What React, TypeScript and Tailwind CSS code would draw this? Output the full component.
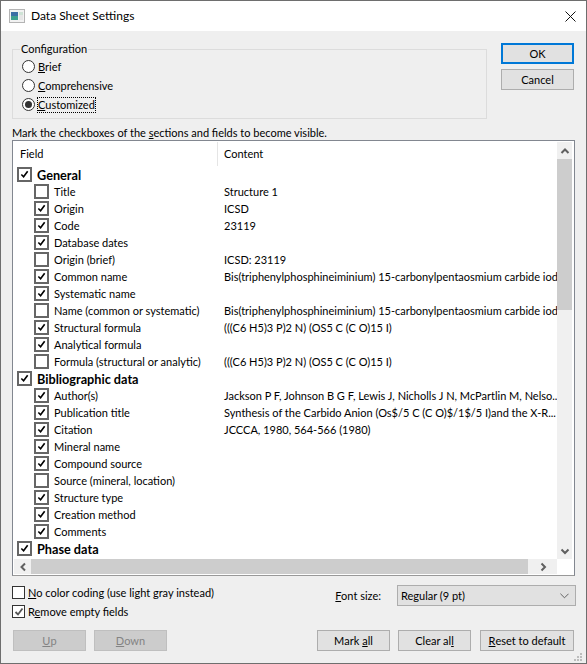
import React from 'react'

interface Row {
  label: string
  content?: string
  checked?: boolean
  section?: boolean
}

const BIS = 'Bis(triphenylphosphineiminium) 15-carbonylpentaosmium carbide iodide'

const ROWS: Row[] = [
  { label: 'General', checked: true, section: true },
  { label: 'Title', content: 'Structure 1' },
  { label: 'Origin', content: 'ICSD', checked: true },
  { label: 'Code', content: '23119', checked: true },
  { label: 'Database dates', checked: true },
  { label: 'Origin (brief)', content: 'ICSD: 23119' },
  { label: 'Common name', content: BIS, checked: true },
  { label: 'Systematic name', checked: true },
  { label: 'Name (common or systematic)', content: BIS },
  { label: 'Structural formula', content: '(((C6 H5)3 P)2 N) (OS5 C (C O)15 I)', checked: true },
  { label: 'Analytical formula', checked: true },
  { label: 'Formula (structural or analytic)', content: '(((C6 H5)3 P)2 N) (OS5 C (C O)15 I)' },
  { label: 'Bibliographic data', checked: true, section: true },
  { label: 'Author(s)', content: 'Jackson P F, Johnson B G F, Lewis J, Nicholls J N, McPartlin M, Nelso...', checked: true },
  { label: 'Publication title', content: 'Synthesis of the Carbido Anion (Os$/5 C (C O)$/1$/5 I)and the X-R...', checked: true },
  { label: 'Citation', content: 'JCCCA, 1980, 564-566 (1980)', checked: true },
  { label: 'Mineral name', checked: true },
  { label: 'Compound source', checked: true },
  { label: 'Source (mineral, location)' },
  { label: 'Structure type', checked: true },
  { label: 'Creation method', checked: true },
  { label: 'Comments', checked: true },
  { label: 'Phase data', checked: true, section: true },
]

const Tick = ({ className }: { className: string }) => (
  <svg viewBox="0 0 10 10" className={className}>
    <path d="M1.5 5 L4 7.5 L8.5 1.5" fill="none" stroke="currentColor" strokeWidth="1.8" />
  </svg>
)

const TreeCheck = ({ checked }: { checked?: boolean }) => (
  <div className="w-[15px] h-[15px] border-2 border-[#666666] bg-white flex items-center justify-center shrink-0">
    {checked && <Tick className="w-[9px] h-[9px] text-black" />}
  </div>
)

const Radio = ({ label, u, selected }: { label: string; u: string; selected?: boolean }) => (
  <div className="flex items-center h-[19px]">
    <div className="w-[13px] h-[13px] rounded-full border border-[#333333] bg-white flex items-center justify-center shrink-0">
      {selected && <div className="w-[7px] h-[7px] rounded-full bg-[#333333]" />}
    </div>
    <span className={selected ? 'ml-[3px] outline-1 outline-dotted outline-black leading-[14px]' : 'ml-[3px]'}>
      <span className="underline">{u}</span>
      {label}
    </span>
  </div>
)

const Button = ({
  children,
  className = '',
  disabled,
  primary,
}: {
  children: React.ReactNode
  className?: string
  disabled?: boolean
  primary?: boolean
}) => (
  <button
    className={`h-[21px] flex items-center justify-center ${
      primary
        ? 'bg-[#e1e1e1] border-2 border-[#0078d7] text-black'
        : disabled
          ? 'bg-[#cccccc] border border-[#bfbfbf] text-[#838383]'
          : 'bg-[#e1e1e1] border border-[#adadad] text-black'
    } ${className}`}
  >
    {children}
  </button>
)

const Chevron = ({ d }: { d: string }) => (
  <svg viewBox="0 0 10 10" className="w-[10px] h-[10px] text-[#606060]">
    <path d={d} fill="none" stroke="currentColor" strokeWidth="2" />
  </svg>
)

export default function App() {
  return (
    <div className="w-[587px] h-[664px] border border-[#6e6e6e] bg-[#efefef] flex flex-col overflow-hidden text-[11px] leading-[16px] text-black font-['Lato',sans-serif]">
      {/* title bar */}
      <div className="h-[30px] bg-white flex items-center shrink-0 pl-[8px] pr-[10px]">
        <svg viewBox="0 0 16 14" className="w-[16px] h-[14px] shrink-0">
          <rect x="0.5" y="0.5" width="15" height="13" fill="#f2f2f2" stroke="#b4b4b4" />
          <rect x="2" y="3" width="7" height="4" fill="#3b6ea5" />
          <rect x="2" y="7" width="7" height="4" fill="#3f9f8f" />
          <rect x="10" y="3" width="4" height="3" fill="#cfe3d6" />
          <rect x="10" y="6" width="4" height="5" fill="#e6e6e6" />
        </svg>
        <span className="ml-[6px] text-[12px]">Data Sheet Settings</span>
        <svg viewBox="0 0 11 11" className="w-[11px] h-[11px] ml-auto">
          <path d="M0.5 0.5 L10.5 10.5 M10.5 0.5 L0.5 10.5" stroke="#111111" strokeWidth="1" />
        </svg>
      </div>

      {/* configuration + OK/Cancel */}
      <div className="flex items-start pl-[11px] pr-[12px] pt-[11px] shrink-0">
        <fieldset className="w-[475px] h-[77px] border border-[#dcdcdc] pl-[8px]">
          <legend className="px-[1px] -ml-[1px] leading-[14px]">Configuration</legend>
          <div className="mt-[1px] ml-[1px]">
            <Radio u="B" label="rief" />
            <Radio u="C" label="omprehensive" />
            <Radio u="C" label="ustomized" selected />
          </div>
        </fieldset>
        <div className="ml-auto mt-[1px] flex flex-col gap-[5px]">
          <Button primary className="w-[73px]">OK</Button>
          <Button className="w-[73px]">Cancel</Button>
        </div>
      </div>

      <div className="pl-[11px] mt-[7px] h-[14px] leading-[14px] shrink-0">
        Mark the checkboxes of the <span className="underline">s</span>ections and fields to become visible.
      </div>

      {/* field list */}
      <div className="mx-[11px] h-[436px] border border-[#828790] border-b-[#999999] bg-white p-[1px] flex flex-col shrink-0">
        <div className="flex flex-1 min-h-0">
          <div className="flex-1 min-w-0 overflow-hidden">
            <div className="flex h-[24px] items-center">
              <div className="w-[204px] pl-[6px] h-[24px] flex items-center border-r border-[#e5e5e5]">Field</div>
              <div className="pl-[6px]">Content</div>
            </div>
            {ROWS.map(row => (
              <div key={row.label} className="flex h-[17px] items-center whitespace-nowrap">
                <div className={`w-[205px] shrink-0 flex items-center ${row.section ? 'pl-[3px]' : 'pl-[20px]'}`}>
                  <TreeCheck checked={row.checked} />
                  <span className={row.section ? 'ml-[5px] font-bold text-[12.7px]' : 'ml-[5px]'}>{row.label}</span>
                </div>
                <div className="pl-[5px]">{row.content}</div>
              </div>
            ))}
          </div>
          {/* vertical scrollbar */}
          <div className="w-[15px] mr-[1px] shrink-0 bg-[#f0f0f0] flex flex-col">
            <div className="h-[17px] flex items-center justify-center">
              <Chevron d="M1.5 7 L5 3.5 L8.5 7" />
            </div>
            <div className="h-[151px] bg-[#cdcdcd]" />
            <div className="flex-1" />
            <div className="h-[17px] flex items-center justify-center">
              <Chevron d="M1.5 3.5 L5 7 L8.5 3.5" />
            </div>
          </div>
        </div>
        {/* horizontal scrollbar */}
        <div className="h-[15px] flex shrink-0 mr-[16px] bg-[#f0f0f0]">
          <div className="w-[17px] flex items-center justify-center">
            <Chevron d="M7 1.5 L3.5 5 L7 8.5" />
          </div>
          <div className="w-[497px] bg-[#cdcdcd]" />
          <div className="flex-1 flex items-center justify-center">
            <Chevron d="M3.5 1.5 L7 5 L3.5 8.5" />
          </div>
        </div>
      </div>

      {/* options + font size */}
      <div className="flex pl-[11px] pr-[10px] mt-[9px] shrink-0">
        <div className="flex flex-col gap-[6px] pt-[1px]">
          <div className="flex items-center h-[13px]">
            <div className="w-[13px] h-[13px] border border-[#333333] bg-white shrink-0" />
            <span className="ml-[3px]">
              <span className="underline">N</span>o color coding (use light gray instead)
            </span>
          </div>
          <div className="flex items-center h-[13px]">
            <div className="w-[13px] h-[13px] border border-[#333333] bg-white shrink-0 flex items-center justify-center">
              <Tick className="w-[10px] h-[10px] text-[#555555]" />
            </div>
            <span className="ml-[3px]">
              R<span className="underline">e</span>move empty fields
            </span>
          </div>
        </div>
        <div className="ml-auto flex items-center h-[21px]">
          <span>
            <span className="underline">F</span>ont size:
          </span>
          <div className="ml-[16px] w-[179px] h-[21px] border border-[#adadad] bg-[#e1e1e1] flex items-center pl-[3px] pr-[6px]">
            Regular (9 pt)
            <svg viewBox="0 0 10 6" className="w-[9px] h-[6px] ml-auto">
              <path d="M0.5 0.5 L5 5 L9.5 0.5" fill="none" stroke="#555555" strokeWidth="1" />
            </svg>
          </div>
        </div>
      </div>

      {/* bottom buttons */}
      <div className="flex pl-[12px] pr-[12px] mt-[12px] shrink-0">
        <Button disabled className="w-[73px]">
          <span className="underline">U</span>p
        </Button>
        <Button disabled className="w-[73px] ml-[8px]">
          <span className="underline">D</span>own
        </Button>
        <Button className="w-[73px] ml-auto">
          Mark <span className="underline ml-[3px]">a</span>ll
        </Button>
        <Button className="w-[73px] ml-[8px]">
          Clear al<span className="underline">l</span>
        </Button>
        <Button className="w-[94px] ml-[9px]">
          <span className="underline">R</span>eset to default
        </Button>
      </div>

      {/* size grip */}
      <div className="ml-auto mt-auto mb-[1px] mr-[3px] shrink-0">
        <svg viewBox="0 0 9 9" className="w-[9px] h-[9px] fill-[#bdbdbd]">
          <rect x="6" y="0" width="2" height="2" />
          <rect x="3" y="3" width="2" height="2" />
          <rect x="6" y="3" width="2" height="2" />
          <rect x="0" y="6" width="2" height="2" />
          <rect x="3" y="6" width="2" height="2" />
          <rect x="6" y="6" width="2" height="2" />
        </svg>
      </div>
    </div>
  )
}
